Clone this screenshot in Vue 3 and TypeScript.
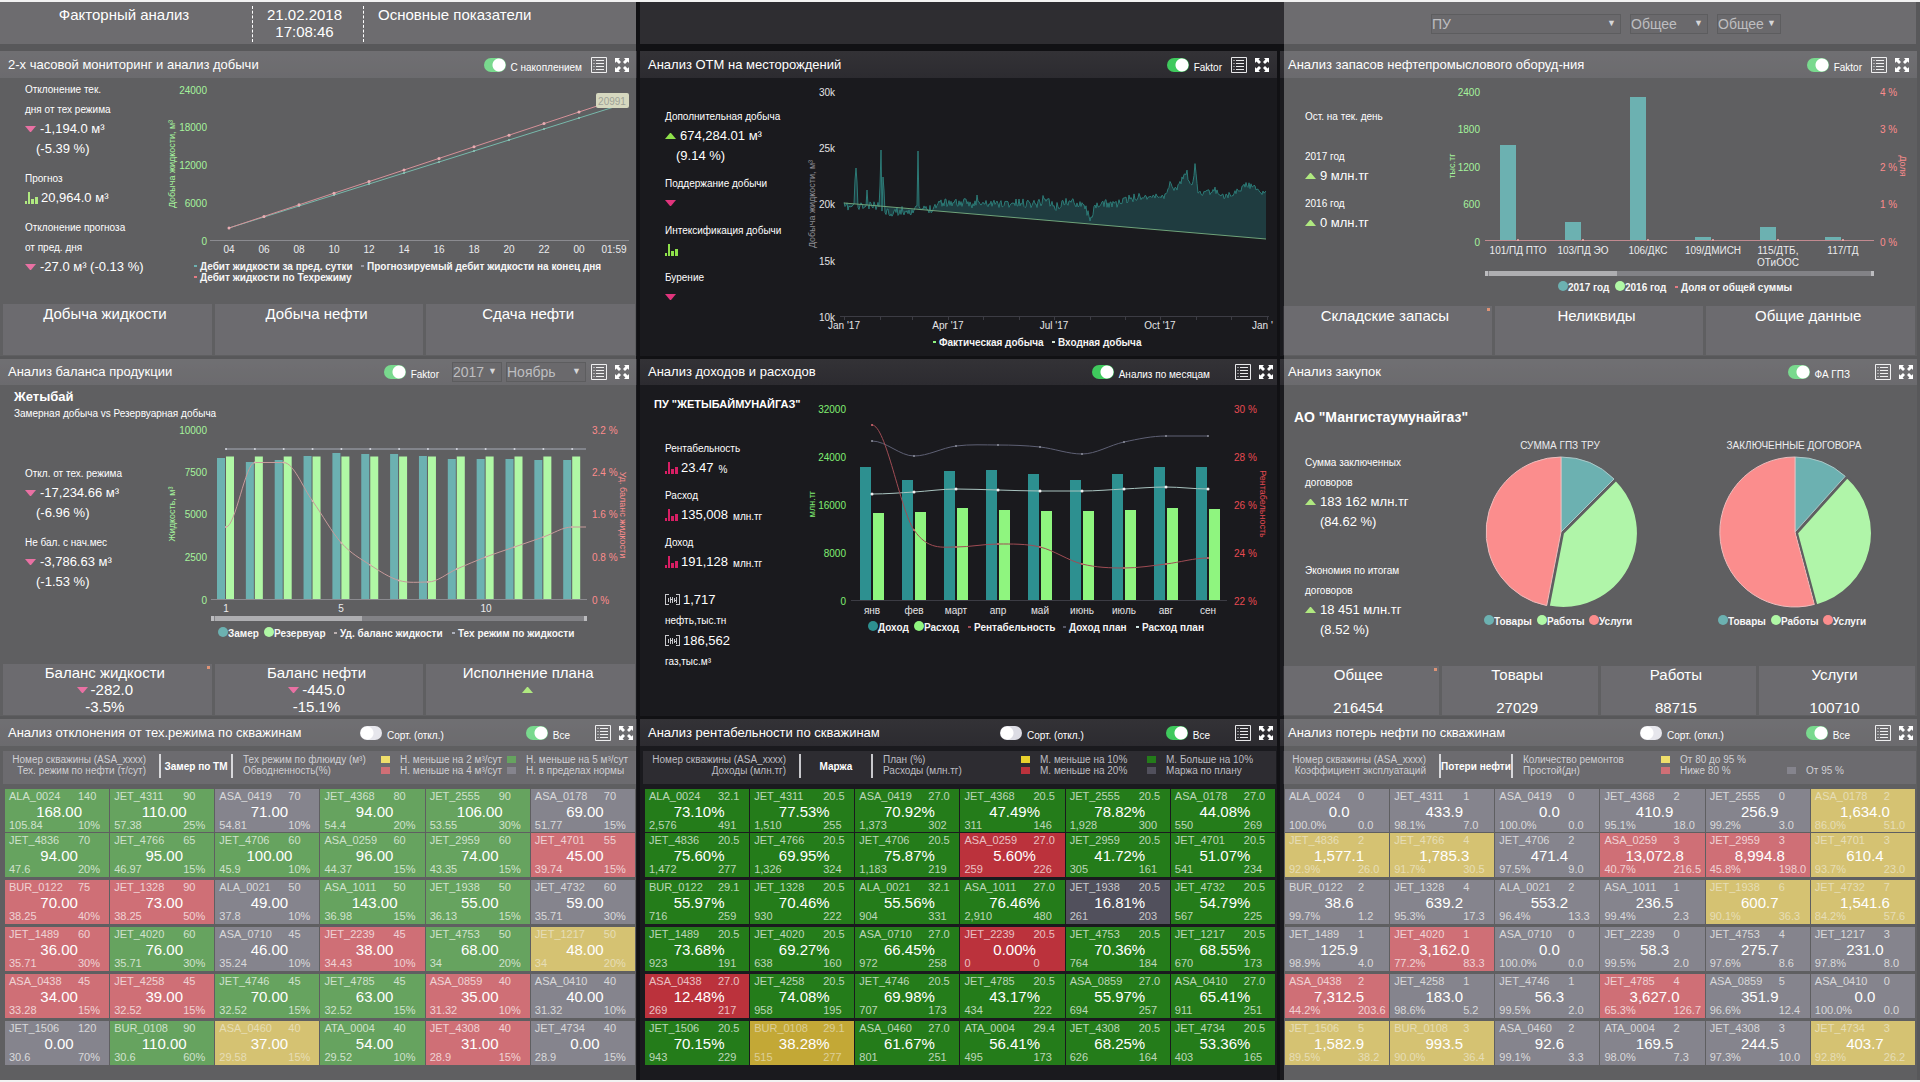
<script setup lang="ts">
import { ref } from 'vue'

interface Label { x: number; y: number; s: string; c?: string; a?: 'start' | 'middle' | 'end'; b?: boolean; r?: number; z?: number }
interface Shape { d: string; fill?: string; stroke?: string; w?: number }
interface Dot { x: number; y: number; r: number; c: string }
interface Chart { box: string; shapes: Shape[]; dots: Dot[]; labels: Label[] }
interface StatLine { icon?: string; text?: string; unit?: string; sub?: boolean; label?: boolean }
interface Tab { name: string; lines: string[]; icon?: string; mark?: boolean }
interface Toggle { text: string; on: boolean }
interface Legend { left: string[]; mid: string; right: string[]; keys: { c: string; t: string }[] }
interface Tile { c: string; name: string; tr: string; v: string; bl: string; br: string }
interface Panel {
  id: string; title: string; toggles: Toggle[]; selects?: { name: string; value: string; cls: string }[]
  heading?: string; sub?: string; stats?: StatLine[][]; chart?: Chart; tabs?: Tab[]; legend?: Legend; tiles?: Tile[]; wide?: boolean
}
type Pt = [number, number]

const TEAL = '#2d9090', LIME = '#8ff57f', RED = '#fa5c5c', AXIS = '#80ee72', ROSE = '#d8434f', GREY = '#e4e4e6', PANEL = '#1a1a1e'

const bar = (x: number, y: number, w: number, base: number) => `M${x} ${y}H${x + w}V${base}H${x}Z`
const line = (p: Pt[]) => 'M' + p.map(q => q.join(' ')).join('L')
const smooth = (p: Pt[]) => {
  let d = `M${p[0][0]} ${p[0][1]}`
  for (let i = 1; i < p.length; i++) {
    const a = p[i - 1], b = p[i], dx = (b[0] - a[0]) / 3
    const slope = (k: number) => {
      const l = p[k - 1], m = p[k], n = p[k + 1]
      if (!l || !n || (m[1] - l[1]) * (n[1] - m[1]) <= 0) return 0
      return (n[1] - l[1]) / (n[0] - l[0])
    }
    d += `C${a[0] + dx} ${a[1] + slope(i - 1) * dx} ${b[0] - dx} ${b[1] - slope(i) * dx} ${b[0]} ${b[1]}`
  }
  return d
}
const ys = (x: number, values: string[], at: number[], c: string, a: 'start' | 'end'): Label[] =>
  values.map((s, i) => ({ x, y: at[i], s, c, a }))
const key = (x: number, y: number, s: string): Label => ({ x, y, s, b: true, a: 'start', c: '#f4f4f4' })
const mark = (x: number, y: number, c: string): Dot => ({ x, y, r: 5, c })
const tick = (x: number, y: number, c: string): Shape => ({ d: `M${x} ${y}h3`, stroke: c, w: 2 })

function forecastChart(): Chart {
  const hours = ['04', '06', '08', '10', '12', '14', '16', '18', '20', '22', '00', '01:59']
  const xs = hours.map((_, i) => 229 + 35 * i)
  const red = xs.map((x, i): Pt => [x, 228 - 11.6 * i])
  const green = xs.map((x, i): Pt => [x, 228 - 11 * i])
  return {
    box: '164 78 476 226',
    shapes: [
      { d: 'M210 240.5H629', stroke: '#5a5a60' },
      { d: line(green), stroke: '#3d9a86' },
      { d: line(red), stroke: '#c5626c' },
      { d: 'M598 93h29q2 0 2 2v11q0 2-2 2h-29q-2 0-2-2v-11q0-2 2-2Z', fill: '#c4c8a4' },
      tick(194, 266, TEAL), tick(361, 266, '#6d6d80'), tick(194, 277, ROSE)
    ],
    dots: [...green.slice(0, 11).map(p => ({ x: p[0], y: p[1], r: 1, c: '#5fb09c' })), ...red.slice(0, 11).map(p => ({ x: p[0], y: p[1], r: 1.5, c: '#e28a92' }))],
    labels: [
      ...ys(207, ['24000', '18000', '12000', '6000', '0'], [90, 127, 165, 203, 241], AXIS, 'end'),
      ...hours.map((s, i): Label => ({ x: xs[i], y: 249, s })),
      { x: 172, y: 164, s: 'Добыча жидкости, м³', c: AXIS, r: -90, z: 9 },
      { x: 612, y: 101, s: '20991', c: '#75786a' },
      key(200, 266, 'Дебит жидкости за пред. сутки'), key(367, 266, 'Прогнозируемый дебит жидкости на конец дня'), key(200, 277, 'Дебит жидкости по Техрежиму')
    ]
  }
}

function fieldChart(): Chart {
  const base: Pt[] = [[204, 207], [240, 206], [248, 212], [290, 209], [300, 202], [340, 204], [400, 203], [405, 197], [415, 208], [425, 202], [444, 203], [449, 218], [456, 208], [462, 204], [480, 203], [495, 197], [526, 196], [530, 182], [535, 190], [540, 184], [544, 175], [547, 173], [550, 186], [553, 184], [555, 165], [558, 191], [565, 194], [575, 190], [585, 197], [598, 191], [606, 184], [615, 188], [626, 194]]
  const spikes: Record<number, number> = { 215: 180, 216: 168, 217: 182, 227: 190, 240: 186, 241: 150, 243: 177, 244: 190, 278: 151, 337: 195 }
  const pts: Pt[] = []
  let seed = 11
  for (let x = 204; x <= 626; x++) {
    seed = (seed * 16807) % 2147483647
    const k = Math.max(1, base.findIndex(b => b[0] >= x))
    const a = base[k - 1], b = base[k]
    const y = a[1] + ((b[1] - a[1]) * (x - a[0])) / (b[0] - a[0]) + (seed / 2147483647 - 0.5) * (x < 500 ? 9 : 6)
    pts.push([x, spikes[x] ?? Math.round(y * 10) / 10])
  }
  return {
    box: '164 78 476 278',
    shapes: [
      { d: line(pts) + 'L626 239L204 203Z', fill: '#1f3c40' },
      { d: line(pts), stroke: '#2c7a76' },
      { d: 'M204 203L626 239', stroke: '#6fa37a' },
      { d: 'M200 316.5H629' + [204, 240, 272, 308, 343, 379, 414, 450, 485, 520, 556, 591, 627].map(x => `M${x}.5 316v4`).join(''), stroke: '#3c3c44' },
      tick(293, 342, LIME), tick(412, 342, '#d8e8d8')
    ],
    dots: [],
    labels: [
      ...ys(195, ['30k', '25k', '20k', '15k', '10k'], [92, 148, 204, 261, 317], GREY, 'end'),
      ...["Jan '17", "Apr '17", "Jul '17", "Oct '17"].map((s, i): Label => ({ x: [204, 308, 414, 520][i], y: 325, s })),
      { x: 612, y: 325, s: "Jan '", a: 'start' },
      { x: 172, y: 204, s: 'Добыча жидкости, м³', c: '#8c8c92', r: -90, z: 9 },
      key(299, 342, 'Фактическая добыча'), key(418, 342, 'Входная добыча')
    ]
  }
}

function stockChart(): Chart {
  const tops = [145, 222, 97, 237, 227, 237]
  const names = ['101/ПД ПТО', '103/ПД ЭО', '106/ДКС', '109/ДМИСН', '115/ДТБ,', '117/ТД']
  return {
    box: '164 78 476 228',
    shapes: [
      ...tops.map((t, i) => ({ d: bar(220 + 65 * i, t, 16, 241), fill: TEAL })),
      { d: 'M205 240.5H594', stroke: '#a85860' },
      { d: bar(205, 271, 389, 276), fill: '#4d4d52' }, { d: bar(209, 271, 128, 276), fill: '#8c8c90' }, { d: 'M205 273.5h3M591 273.5h3', stroke: '#a0a0a4', w: 5 },
      tick(395, 287, ROSE)
    ],
    dots: [...tops.map((_, i) => ({ x: 238 + 65 * i, y: 240, r: 1, c: '#e88' })), mark(283, 286, TEAL), mark(340, 286, LIME)],
    labels: [
      ...ys(200, ['2400', '1800', '1200', '600', '0'], [92, 129, 167, 204, 242], AXIS, 'end'),
      ...ys(600, ['4 %', '3 %', '2 %', '1 %', '0 %'], [92, 129, 167, 204, 242], RED, 'start'),
      ...names.map((s, i): Label => ({ x: 238 + 65 * i, y: 250, s })), { x: 498, y: 262, s: 'ОТиООС' },
      { x: 172, y: 166, s: 'тыс.тг', c: AXIS, r: -90, z: 9 }, { x: 623, y: 166, s: 'Доля', c: RED, r: 90, z: 9 },
      key(288, 287, '2017 год'), key(345, 287, '2016 год'), key(401, 287, 'Доля от общей суммы')
    ]
  }
}

function balanceChart(): Chart {
  const step = 28.85
  const teal = [458, 462, 460, 456, 453, 454, 454, 456, 459, 459, 459, 460, 460]
  const ratio = [527, 462.5, 462.5, 501, 543, 565, 580.5, 582, 569, 557, 547, 537, 527]
  const xs = teal.map((_, i) => 226 + step * i)
  return {
    box: '164 385 476 279',
    shapes: [
      { d: 'M211 599.5H587', stroke: '#5a5a60' },
      ...teal.map((t, i) => ({ d: bar(xs[i] - 9, t, 8, 599), fill: TEAL })),
      ...teal.map((_, i) => ({ d: bar(xs[i], 456.5, 8, 599), fill: LIME })),
      { d: 'M226 449H586', stroke: '#7f8797' },
      { d: smooth([...xs.map((x, i): Pt => [x, ratio[i]]), [586, 527]]), stroke: '#b07070' },
      { d: bar(211, 616, 376, 621), fill: '#4d4d52' }, { d: bar(215, 616, 147, 621), fill: '#8c8c90' }, { d: 'M211 618.5h3M584 618.5h3', stroke: '#a0a0a4', w: 5 },
      tick(334, 633, '#a09090'), tick(452, 633, '#8b93a3')
    ],
    dots: [...xs.map(x => ({ x, y: 449, r: 1, c: '#c4c8d4' })), ...xs.map((x, i) => ({ x, y: ratio[i], r: 1, c: '#d09090' })), mark(223, 632, TEAL), mark(269, 632, LIME)],
    labels: [
      ...ys(207, ['10000', '7500', '5000', '2500', '0'], [430, 472, 514, 557, 600], AXIS, 'end'),
      ...ys(592, ['3.2 %', '2.4 %', '1.6 %', '0.8 %', '0 %'], [430, 472, 514, 557, 600], RED, 'start'),
      { x: 226, y: 608, s: '1' }, { x: 341, y: 608, s: '5' }, { x: 486, y: 608, s: '10' },
      { x: 172, y: 514, s: 'Жидкость, м³', c: AXIS, r: -90, z: 9 }, { x: 623, y: 515, s: 'Уд. баланс жидкости', c: RED, r: 90, z: 9 },
      key(228, 633, 'Замер'), key(274, 633, 'Резервуар'), key(340, 633, 'Уд. баланс жидкости'), key(458, 633, 'Тех режим по жидкости')
    ]
  }
}

function incomeChart(): Chart {
  const months = ['янв', 'фев', 'март', 'апр', 'май', 'июнь', 'июль', 'авг', 'сен']
  const xs = months.map((_, i) => 232 + 42 * i)
  const pts = (v: number[]) => v.map((y, i): Pt => [xs[i], y])
  const income = [467, 480, 471, 470, 474, 480, 474, 467, 467]
  const cost = [513, 512, 508, 510, 511, 511, 510, 508, 509]
  const grey = pts([441, 456, 446, 445, 447, 454, 442, 436, 436])
  const white = pts([494, 492, 489, 490, 491, 491, 489, 487, 489])
  const red = pts([425, 530, 547, 544, 547, 564, 568, 564, 558])
  return {
    box: '164 385 476 331',
    shapes: [
      { d: 'M211 600.5H587', stroke: '#3c3c44' },
      ...income.map((t, i) => ({ d: bar(xs[i] - 12, t, 11, 600), fill: TEAL })),
      ...cost.map((t, i) => ({ d: bar(xs[i] + 1, t, 11, 600), fill: LIME })),
      { d: smooth(grey), stroke: '#5e6074' }, { d: smooth(white), stroke: '#a9c4c0' }, { d: smooth(red), stroke: '#a04c54' },
      tick(328, 627, '#a04c54'), tick(423, 627, '#565868'), tick(496, 627, '#d0e4e0')
    ],
    dots: [...grey.map(p => ({ x: p[0], y: p[1], r: 1, c: '#8e909c' })), ...white.map(p => ({ x: p[0], y: p[1], r: 1.5, c: '#f0f0f0' })), ...red.map(p => ({ x: p[0], y: p[1], r: 1, c: '#d86a70' })), mark(233, 626, TEAL), mark(279, 626, LIME)],
    labels: [
      ...ys(206, ['32000', '24000', '16000', '8000', '0'], [409, 457, 505, 553, 601], AXIS, 'end'),
      ...ys(594, ['30 %', '28 %', '26 %', '24 %', '22 %'], [409, 457, 505, 553, 601], '#e84a52', 'start'),
      ...months.map((s, i): Label => ({ x: xs[i], y: 610, s })),
      { x: 172, y: 504, s: 'млн.тг', c: AXIS, r: -90, z: 9 }, { x: 623, y: 504, s: 'Рентабельность', c: '#e84a52', r: 90, z: 9 },
      key(238, 627, 'Доход'), key(284, 627, 'Расход'), key(334, 627, 'Рентабельность'), key(429, 627, 'Доход план'), key(502, 627, 'Расход план')
    ]
  }
}

function pieChart(): Chart {
  const slice = (cx: number, cy: number, from: number, to: number) => {
    const at = (deg: number) => `${(cx + 75 * Math.sin((deg * Math.PI) / 180)).toFixed(1)} ${(cy - 75 * Math.cos((deg * Math.PI) / 180)).toFixed(1)}`
    return `M${cx} ${cy}L${at(from)}A75 75 0 ${to - from > 180 ? 1 : 0} 1 ${at(to)}Z`
  }
  const pie = (cx: number, a: number, b: number): Shape[] => [
    { d: slice(cx, 532, 0, a), fill: TEAL, stroke: '#8ab0b0' },
    { d: slice(cx, 532, b, 360), fill: RED, stroke: '#e6a0a0' },
    { d: slice(cx + 2, 533, a, b), fill: '#8ff184', stroke: PANEL, w: 2 }
  ]
  const keys = (dx: number) => [key(214 + dx, 621, 'Товары'), key(267 + dx, 621, 'Работы'), key(319 + dx, 621, 'Услуги')]
  const marks = (dx: number) => [mark(209 + dx, 620, TEAL), mark(262 + dx, 620, LIME), mark(314 + dx, 620, RED)]
  return {
    box: '164 385 476 281',
    shapes: [...pie(281, 45, 191), ...pie(515, 42, 165)],
    dots: [...marks(0), ...marks(234)],
    labels: [{ x: 280, y: 445, s: 'СУММА ГПЗ ТРУ' }, { x: 514, y: 445, s: 'ЗАКЛЮЧЕННЫЕ ДОГОВОРА' }, ...keys(0), ...keys(234)]
  }
}

const wells = ['ALA_0024', 'JET_4311', 'ASA_0419', 'JET_4368', 'JET_2555', 'ASA_0178', 'JET_4836', 'JET_4766', 'JET_4706', 'ASA_0259', 'JET_2959', 'JET_4701', 'BUR_0122', 'JET_1328', 'ALA_0021', 'ASA_1011', 'JET_1938', 'JET_4732', 'JET_1489', 'JET_4020', 'ASA_0710', 'JET_2239', 'JET_4753', 'JET_1217', 'ASA_0438', 'JET_4258', 'JET_4746', 'JET_4785', 'ASA_0859', 'ASA_0410', 'JET_1506', 'BUR_0108', 'ASA_0460', 'ATA_0004', 'JET_4308', 'JET_4734']
const tiles = (colors: string, rows: string): Tile[] =>
  rows.trim().split(/\s+/).map((r, i) => {
    const [tr, v, bl, br] = r.split('|')
    return { c: colors[i], name: wells[i], tr, v, bl, br }
  })

const modeTiles = tiles('ggnggngggggrrrnggnrgnrgyrrggrnngygrn', `
140|168.00|105.84|10% 90|110.00|57.38|25% 70|71.00|54.81|10% 80|94.00|54.4|20% 90|106.00|53.55|30% 70|69.00|51.77|15%
70|94.00|47.6|20% 65|95.00|46.97|15% 60|100.00|45.9|10% 60|96.00|44.37|15% 60|74.00|43.35|15% 55|45.00|39.74|15%
75|70.00|38.25|40% 90|73.00|38.25|50% 50|49.00|37.8|10% 50|143.00|36.98|15% 50|55.00|36.13|15% 60|59.00|35.71|30%
60|36.00|35.71|30% 60|76.00|35.71|30% 45|46.00|35.24|10% 45|38.00|34.43|10% 50|68.00|34|20% 50|48.00|34|20%
45|34.00|33.28|15% 45|39.00|32.52|15% 45|70.00|32.52|15% 45|63.00|32.52|15% 40|35.00|31.32|10% 40|40.00|31.32|10%
120|0.00|30.6|70% 90|110.00|30.6|60% 40|37.00|29.58|15% 40|54.00|29.52|10% 40|31.00|28.9|15% 40|0.00|28.9|15%`)
const marginTiles = tiles('gggggggggrggggggnggggrggrggggggygggg', `
32.1|73.10%|2,576|491 20.5|77.53%|1,510|255 27.0|70.92%|1,373|302 20.5|47.49%|311|146 20.5|78.82%|1,928|300 27.0|44.08%|550|269
20.5|75.60%|1,472|277 20.5|69.95%|1,326|324 20.5|75.87%|1,183|219 27.0|5.60%|259|226 20.5|41.72%|305|161 20.5|51.07%|541|234
29.1|55.97%|716|259 20.5|70.46%|930|222 32.1|55.56%|904|331 27.0|76.46%|2,910|480 20.5|16.81%|261|203 20.5|54.79%|567|225
20.5|73.68%|923|191 20.5|69.27%|638|160 27.0|66.45%|972|258 20.5|0.00%|0|0 20.5|70.36%|764|184 20.5|68.55%|670|173
27.0|12.48%|269|217 20.5|74.08%|958|195 20.5|69.98%|707|173 20.5|43.17%|434|222 27.0|55.97%|694|257 27.0|65.41%|911|251
20.5|70.15%|943|229 29.1|38.28%|515|277 27.0|61.67%|801|251 29.4|56.41%|495|173 20.5|68.25%|626|164 20.5|53.36%|403|165`)
const lossTiles = tiles('nnnnnyyynrrynnnnyynrnnnnrnnrnnyynnny', `
0|0.0|100.0%|0.0 1|433.9|98.1%|7.0 0|0.0|100.0%|0.0 2|410.9|95.1%|18.0 0|256.9|99.2%|3.0 2|1,634.0|86.0%|51.0
2|1,577.1|92.9%|26.0 4|1,785.3|91.7%|30.5 2|471.4|97.5%|9.0 3|13,072.8|40.7%|216.5 3|8,994.8|45.8%|198.0 3|610.4|93.7%|23.0
2|38.6|99.7%|1.2 4|639.2|95.3%|17.3 2|553.2|96.4%|13.3 1|236.5|99.4%|2.3 6|600.7|90.1%|36.3 7|1,541.6|84.2%|57.6
1|125.9|98.9%|4.0 1|3,162.0|77.2%|83.3 0|0.0|100.0%|0.0 0|58.3|99.5%|2.0 4|275.7|97.6%|8.6 3|231.0|97.8%|8.0
2|7,312.5|44.2%|203.6 1|183.0|98.6%|5.2 1|56.3|99.5%|2.0 4|3,627.0|65.3%|126.7 5|351.9|96.6%|12.4 0|0.0|100.0%|0.0
5|1,582.9|89.5%|38.2 3|993.5|90.0%|36.4 2|92.6|99.1%|3.3 2|169.5|98.0%|7.3 3|244.5|97.3%|10.0 3|403.7|92.8%|26.2`)

const L = (text: string): StatLine => ({ text, label: true })
const V = (icon: string, text?: string, unit?: string): StatLine => ({ icon, text, unit })
const S = (text: string): StatLine => ({ text, sub: true })
const bottomToggles = (): Toggle[] => [{ text: 'Сорт. (откл.)', on: false }, { text: 'Все', on: true }]

const panels = ref<Panel[]>([
  {
    id: 'monitoring', title: '2-х часовой мониторинг и анализ добычи', toggles: [{ text: 'С накоплением', on: true }],
    stats: [[L('Отклонение тек.'), L('дня от тех режима'), V('down', '-1,194.0 м³'), S('(-5.39 %)')], [L('Прогноз'), V('bars', '20,964.0 м³')], [L('Отклонение прогноза'), L('от пред. дня'), V('down', '-27.0 м³ (-0.13 %)')]],
    chart: forecastChart(), tabs: [{ name: 'Добыча жидкости', lines: [] }, { name: 'Добыча нефти', lines: [] }, { name: 'Сдача нефти', lines: [] }]
  },
  {
    id: 'fields', title: 'Анализ ОТМ на месторождений', toggles: [{ text: 'Faktor', on: true }],
    stats: [[L('Дополнительная добыча'), V('up', '674,284.01 м³'), S('(9.14 %)')], [L('Поддержание добычи'), V('down')], [L('Интексификация добычи'), V('bars')], [L('Бурение'), V('down')]],
    chart: fieldChart()
  },
  {
    id: 'stock', title: 'Анализ запасов нефтепромыслового оборуд-ния', toggles: [{ text: 'Faktor', on: true }],
    stats: [[L('Ост. на тек. день')], [L('2017 год'), V('up', '9 млн.тг')], [L('2016 год'), V('up', '0 млн.тг')]],
    chart: stockChart(), tabs: [{ name: 'Складские запасы', lines: [], mark: true }, { name: 'Неликвиды', lines: [] }, { name: 'Общие данные', lines: [] }]
  },
  {
    id: 'balance', title: 'Анализ баланса продукции', toggles: [{ text: 'Faktor', on: true }],
    selects: [{ name: 'Год', value: '2017', cls: 'year' }, { name: 'Месяц', value: 'Ноябрь', cls: 'month' }],
    heading: 'Жетыбай', sub: 'Замерная добыча vs Резервуарная добыча',
    stats: [[L('Откл. от тех. режима'), V('down', '-17,234.66 м³'), S('(-6.96 %)')], [L('Не бал. с нач.мес'), V('down', '-3,786.63 м³'), S('(-1.53 %)')]],
    chart: balanceChart(), tabs: [{ name: 'Баланс жидкости', icon: 'down', lines: ['-282.0', '-3.5%'], mark: true }, { name: 'Баланс нефти', icon: 'down', lines: ['-445.0', '-15.1%'] }, { name: 'Исполнение плана', icon: 'up', lines: [''] }]
  },
  {
    id: 'income', title: 'Анализ доходов и расходов', toggles: [{ text: 'Анализ по месяцам', on: true }], wide: true, heading: 'ПУ "ЖЕТЫБАЙМУНАЙГАЗ"',
    stats: [[L('Рентабельность'), V('pink', '23.47', '%')], [L('Расход'), V('pink', '135,008', 'млн.тг')], [L('Доход'), V('pink', '191,128', 'млн.тг')], [V('meter', '1,717'), L('нефть,тыс.тн'), V('meter', '186,562'), L('газ,тыс.м³')]],
    chart: incomeChart()
  },
  {
    id: 'purchases', title: 'Анализ закупок', toggles: [{ text: 'ФА ГПЗ', on: true }], wide: true, heading: 'АО "Мангистаумунайгаз"',
    stats: [[L('Сумма заключенных'), L('договоров'), V('up', '183 162 млн.тг'), S('(84.62 %)')], [L('Экономия по итогам'), L('договоров'), V('up', '18 451 млн.тг'), S('(8.52 %)')]],
    chart: pieChart(), tabs: [{ name: 'Общее', lines: ['216454'], mark: true }, { name: 'Товары', lines: ['27029'] }, { name: 'Работы', lines: ['88715'] }, { name: 'Услуги', lines: ['100710'] }]
  },
  {
    id: 'mode', title: 'Анализ отклонения от тех.режима по скважинам', toggles: bottomToggles(), wide: true, tiles: modeTiles,
    legend: { left: ['Номер скважины (ASA_xxxx)', 'Тех. режим по нефти (т/сут)'], mid: 'Замер по ТМ', right: ['Тех режим по флюиду (м³)', 'Обводненность(%)'], keys: [{ c: 'y', t: 'Н. меньше на 2 м³/сут' }, { c: 'g', t: 'Н. меньше на 5 м³/сут' }, { c: 'r', t: 'Н. меньше на 4 м³/сут' }, { c: 'n', t: 'Н. в пределах нормы' }] }
  },
  {
    id: 'margin', title: 'Анализ рентабельности по скважинам', toggles: bottomToggles(), wide: true, tiles: marginTiles,
    legend: { left: ['Номер скважины (ASA_xxxx)', 'Доходы (млн.тг)'], mid: 'Маржа', right: ['План (%)', 'Расходы (млн.тг)'], keys: [{ c: 'y', t: 'М. меньше на 10%' }, { c: 'g', t: 'М. Больше на 10%' }, { c: 'r', t: 'М. меньше на 20%' }, { c: 'n', t: 'Маржа по плану' }] }
  },
  {
    id: 'loss', title: 'Анализ потерь нефти по скважинам', toggles: bottomToggles(), wide: true, tiles: lossTiles,
    legend: { left: ['Номер скважины (ASA_xxxx)', 'Коэффициент эксплуатаций'], mid: 'Потери нефти', right: ['Количество ремонтов', 'Простой(дн)'], keys: [{ c: 'y', t: 'От 80 до 95 %' }, { c: '', t: '' }, { c: 'r', t: 'Ниже 80 %' }, { c: 'n', t: 'От 95 %' }] }
  }
])
const filters = [{ name: 'Подразделение', value: 'ПУ', cls: 'unit' }, { name: 'Раздел', value: 'Общее', cls: 'section' }, { name: 'Вид', value: 'Общее', cls: 'kind' }]

const barsPath = 'M0 9h2v3H0ZM3 0h2v12H3ZM6 7h3v5H6ZM10 5h3v7h-3Z'
const icons: Record<string, { box: string; d: string }> = {
  down: { box: '0 0 12 12', d: 'M0 3H11L6 9H5Z' },
  up: { box: '0 0 12 12', d: 'M0 9H11L6 3H5Z' },
  bars: { box: '0 0 13 13', d: barsPath },
  pink: { box: '0 0 13 13', d: barsPath },
  meter: { box: '0 0 15 12', d: 'M0 0h4v1H1v9h3v1H0ZM15 0h-4v1h3v9h-3v1h4ZM3 4h1v4H3ZM5 3h1v6H5ZM6 5h2v1H6ZM7 3h1v6H7ZM9 4h1v4H9ZM11 3h1v6h-1ZM9 6h3v1H9Z' }
}
</script>

<template>
  <div class="page">
    <header class="top">
      <div class="cell brand">
        <h1>Факторный анализ</h1>
        <time datetime="2018-02-21T17:08:46">21.02.2018<br>17:08:46</time>
        <span class="section-name">Основные показатели</span>
      </div>
      <div class="cell"></div>
      <div class="cell filters">
        <span v-for="f in filters" :key="f.name" class="pick" :class="f.cls">
          <select :aria-label="f.name"><option>{{ f.value }}</option></select>
        </span>
      </div>
    </header>

    <main class="board">
      <section v-for="p in panels" :key="p.id" class="panel" :class="[p.id, { wide: p.wide }]">
        <div class="bar">
          <h2>{{ p.title }}</h2>
          <label v-for="t in p.toggles" :key="t.text" class="toggle">
            <input v-model="t.on" type="checkbox"><span>{{ t.text }}</span>
          </label>
          <div v-if="p.selects" class="picks">
            <span v-for="s in p.selects" :key="s.name" class="pick" :class="s.cls">
              <select :aria-label="s.name"><option>{{ s.value }}</option></select>
            </span>
          </div>
          <button class="tool" aria-label="Список">
            <svg width="16" height="16" viewBox="0 0 16 16"><path d="M.5.5h15v15H.5ZM5 3.500h8M5 6.500h8M5 9.500h8M5 12.500h8M2.500 3.500h1M2.500 6.500h1M2.500 9.500h1M2.500 12.500h1" fill="none" stroke="#e8e8ea" /></svg>
          </button>
          <button class="tool" aria-label="Развернуть">
            <svg width="14" height="14" viewBox="0 0 14 14"><path d="M0 0h5L3.600 1.400 6 4 4 6 1.400 3.600 0 5ZM14 0v5L12.600 3.600 10 6 8 4l2.400-2.600L9 0ZM0 14V9l1.400 1.400L4 8l2 2-2.400 2.600L5 14ZM14 14H9l1.400-1.400L8 10l2-2 2.600 2.400L14 9Z" fill="#fff" /></svg>
          </button>
        </div>

        <div v-if="p.chart" class="body">
          <div class="side">
            <h3 v-if="p.heading">{{ p.heading }}</h3>
            <p v-if="p.sub" class="note">{{ p.sub }}</p>
            <div class="stats">
              <div v-for="(g, i) in p.stats" :key="i" class="group">
                <div v-for="(s, k) in g" :key="k" :class="s.label ? 'label' : s.sub ? 'value second' : 'value'">
                  <svg v-if="s.icon" class="ico" :class="s.icon" :viewBox="icons[s.icon].box"><path :d="icons[s.icon].d" /></svg>
                  <span>{{ s.text }}</span><small v-if="s.unit">{{ s.unit }}</small>
                </div>
              </div>
            </div>
          </div>
          <svg class="chart" :viewBox="p.chart.box" role="img" :aria-label="p.title">
            <path v-for="(s, i) in p.chart.shapes" :key="'s' + i" :d="s.d" :fill="s.fill ?? 'none'" :stroke="s.stroke ?? 'none'" :stroke-width="s.w ?? 1" />
            <circle v-for="(c, i) in p.chart.dots" :key="'c' + i" :cx="c.x" :cy="c.y" :r="c.r" :fill="c.c" />
            <text
              v-for="(t, i) in p.chart.labels" :key="'t' + i" :x="t.x" :y="t.y" :fill="t.c ?? '#e4e4e6'" :font-size="t.z ?? 10"
              :font-weight="t.b ? 700 : 400" :text-anchor="t.a ?? 'middle'" :transform="t.r ? `rotate(${t.r} ${t.x} ${t.y})` : undefined"
            >{{ t.s }}</text>
          </svg>
        </div>

        <div v-if="p.tabs" class="tabs">
          <button v-for="t in p.tabs" :key="t.name" class="tab">
            <span>{{ t.name }}</span>
            <span v-for="(l, i) in t.lines" :key="i" class="line">
              <svg v-if="t.icon && i === 0" class="ico" :class="t.icon" :viewBox="icons[t.icon].box"><path :d="icons[t.icon].d" /></svg>{{ l }}
            </span>
            <i v-if="t.mark" class="mark"></i>
          </button>
        </div>

        <div v-if="p.legend" class="legend">
          <div class="cap left"><span v-for="l in p.legend.left" :key="l">{{ l }}</span></div>
          <strong>{{ p.legend.mid }}</strong>
          <div class="cap right"><span v-for="l in p.legend.right" :key="l">{{ l }}</span></div>
          <div class="keys">
            <span v-for="(k, i) in p.legend.keys" :key="i" class="key"><i :class="k.c"></i>{{ k.t }}</span>
          </div>
        </div>
        <div v-if="p.tiles" class="tiles">
          <div v-for="t in p.tiles" :key="t.name" class="tile" :class="t.c">
            <span>{{ t.name }}</span><span>{{ t.tr }}</span>
            <b>{{ t.v }}</b>
            <span>{{ t.bl }}</span><span>{{ t.br }}</span>
          </div>
        </div>
      </section>
    </main>
    <div class="veil start"></div>
    <div class="veil end"></div>
  </div>
</template>

<style>
body { background: #f2f2f2; }
</style>

<style scoped>
* { box-sizing: border-box; }
.page { position: relative; margin: 2px 0; background: #111114; color: #fff; font-family: "Liberation Sans", Arial, sans-serif; overflow: hidden; }
h1, h2, h3, p { margin: 0; font-weight: 400; }
button { border: 0; padding: 0; background: none; color: inherit; font: inherit; }
.veil { position: absolute; top: 0; bottom: 0; width: calc(100% / 3 - 4px); background: rgba(255, 255, 255, .3); pointer-events: none; }
.veil.start { left: 0; }
.veil.end { right: 0; }

.top, .board { display: grid; grid-template-columns: repeat(3, minmax(0, 1fr)); }
.cell { height: 42px; background: #2e2d31; }
.brand { display: flex; padding-top: 4px; margin-right: 4px; font-size: 15px; line-height: 17px; }
.brand h1 { width: 252px; font-size: 15px; line-height: 17px; text-align: center; padding-right: 4px; }
.brand time { width: 112px; height: 36px; text-align: center; border: 1px dashed #fff; border-width: 0 1px; padding-right: 7px; }
.section-name { padding-left: 14px; }
.filters { display: flex; align-items: flex-start; gap: 9px; padding: 12px 0 0 151px; margin-right: 4px; }

.pick { position: relative; height: 20px; font-size: 14px; }
.pick select { appearance: none; width: 100%; height: 20px; padding: 0; border: 1px solid #18181b; border-radius: 0; background: #2a292d; color: #a2a2a6; font: inherit; line-height: 18px; }
.pick::after { content: '▼'; position: absolute; right: 5px; top: 4px; font-size: 9px; line-height: 10px; color: #c4c4c8; pointer-events: none; }
.unit { width: 190px; }
.section { width: 78px; }
.kind { width: 64px; }
.year { width: 50px; }
.month { width: 80px; }
.picks { display: flex; gap: 4px; margin-left: 13px; }

.board { row-gap: 3px; margin-top: 7px; }
.panel { margin-right: 3px; background: #1a1a1e; display: flex; flex-direction: column; }
.bar { display: flex; align-items: center; height: 27px; padding: 0 8px; background: linear-gradient(#333236, #2c2b30); }
.balance .bar, .income .bar, .purchases .bar { height: 26px; }
.wide .bar { padding-right: 4px; }
.bar h2 { flex: 1; font-size: 13px; line-height: 20px; white-space: nowrap; }
.toggle { display: flex; align-items: center; gap: 5px; font-size: 10px; line-height: 12px; white-space: nowrap; }
.toggle span { padding-top: 6px; }
.toggle + .toggle { margin-left: 82px; }
.toggle input { appearance: none; width: 22px; height: 14px; margin: 0; border-radius: 7px; background: radial-gradient(circle at 15px 7px, #fff 0 6px, transparent 7px), #3fc95d; }
.toggle input:not(:checked) { background: radial-gradient(circle at 7px 7px, #fff 0 6px, transparent 7px), #dcdce4; }
.tool { display: flex; margin-left: 8px; }
.toggle + .tool { margin-left: 9px; }
.picks + .tool { margin-left: 5px; }
.wide .toggle + .tool { margin-left: 25px; }

.body { display: flex; align-items: flex-start; margin-right: -3px; }
.side { width: 164px; padding-left: 14px; white-space: nowrap; }
.chart { flex: 1; min-width: 0; display: block; overflow: hidden; }
.chart text { dominant-baseline: central; }
h3 { font-weight: 700; font-size: 13px; line-height: 16px; padding-top: 4px; }
.income h3 { padding-top: 11px; font-size: 11px; }
.purchases h3 { padding-top: 24px; font-size: 14px; }
.note { font-size: 10px; line-height: 16px; padding-top: 1px; }
.stats { display: flex; flex-direction: column; gap: 8px; padding-left: 11px; }
.monitoring .stats { padding-top: 2px; gap: 10px; }
.fields .stats, .stock .stats { padding-top: 29px; }
.stock .group:first-child { min-height: 32px; }
.balance .stats { padding-top: 42px; gap: 10px; }
.income .stats { padding-top: 27px; }
.income .group:last-child { padding-top: 10px; }
.purchases .stats { padding-top: 28px; gap: 29px; }
.label { font-size: 10px; line-height: 20px; }
.income .group:last-child .label { line-height: 22px; }
.value { display: flex; align-items: center; gap: 3px; height: 20px; font-size: 13px; line-height: 20px; }
.label + .value { margin-top: -1px; }
.value small { font-size: 10px; padding: 3px 0 0 2px; }
.second { padding-left: 11px; }
.purchases .second { padding-left: 15px; }
.ico { width: 12px; height: 12px; flex: none; }
.ico.down { fill: #e0347c; }
.ico.up, .ico.bars { fill: #8ee04a; }
.ico.pink { fill: #d81e64; }
.ico.bars, .ico.pink { width: 13px; height: 13px; }
.ico.meter { width: 15px; fill: #c8c8cc; }

.tabs { display: flex; gap: 3px; flex: 1; padding: 0 2px 1px 3px; }
.tab { position: relative; flex: 1 1 0; height: 51px; display: flex; flex-direction: column; align-items: center; padding-right: 5px; background: #2d2c31; font-size: 15px; line-height: 17px; }
.monitoring .tab, .stock .tab { padding-top: 1px; }
.stock .tab, .purchases .tab { height: 49px; }
.purchases .line { margin-top: 16px; }
.line { display: flex; align-items: center; gap: 2px; height: 17px; }
.mark { position: absolute; top: 2px; right: 2px; width: 3px; height: 3px; background: #d0653c; }

.legend { display: flex; height: 33px; margin: 5px 1px 5px 3px; padding-top: 3px; background: #2d2c31; color: #bdbdc2; font-size: 10px; line-height: 11px; white-space: nowrap; }
.cap { display: flex; flex-direction: column; }
.cap.left { width: 156px; padding-right: 13px; text-align: right; }
.legend strong { width: 74px; height: 24px; line-height: 25px; display: flex; justify-content: center; color: #fff; border: 2px solid #c8c8cc; border-width: 0 2px; font-size: 10px; }
.cap.right { flex: 1; padding-left: 10px; }
.keys { display: grid; grid-template-columns: 126px 129px; grid-auto-rows: 11px; }
.key { display: flex; align-items: center; gap: 10px; }
.key i { width: 9px; height: 7px; }

.tiles { display: grid; grid-template-columns: repeat(6, minmax(0, 1fr)); grid-template-rows: 41px; grid-auto-rows: 44px; gap: 3px 1px; padding: 0 2px 15px 5px; }
.tile { display: grid; grid-template-columns: 69px 1fr; grid-template-rows: 14px 17px 11px; padding-left: 4px; font-size: 11px; line-height: 14px; color: rgba(255, 255, 255, .7); white-space: nowrap; }
.tile:nth-child(-n+6) { height: 43px; }
.tile b { grid-column: 1 / -1; font-weight: 400; font-size: 15px; line-height: 17px; text-align: center; color: #fff; }
.tile span:nth-last-child(-n+2) { line-height: 11px; }
.g { background: #247c1a; }
.r { background: #bb323c; }
.n { background: #51505c; }
.y { background: #c3a836; }
.tile.y { color: #dccf98; }
.key .y { background: #e8d02c; }
</style>
